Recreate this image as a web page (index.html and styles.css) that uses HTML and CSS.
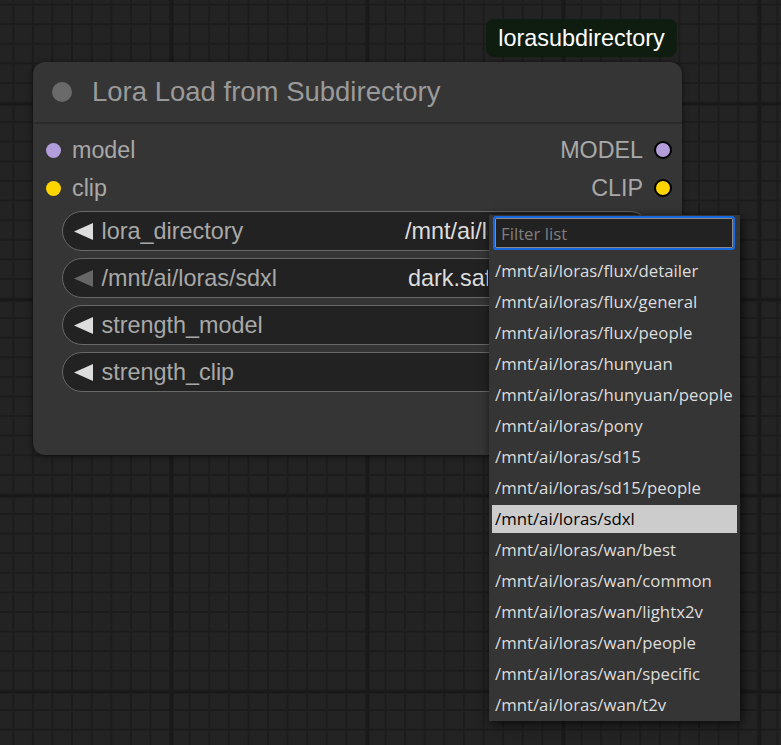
FILE: index.html
```html
<!DOCTYPE html>
<html>
<head>
<meta charset="utf-8">
<link rel="stylesheet" href="styles.css">
</head>
<body>
<div class="canvas">
  <div class="badge">lorasubdirectory</div>

  <div class="node">
    <div class="node-title">
      <span class="title-dot"></span>
      <span class="title-text">Lora Load from Subdirectory</span>
    </div>
    <div class="node-body">
      <div class="slot-row">
        <div class="slot slot-in"><span class="dot dot-model"></span><span>model</span></div>
        <div class="slot slot-out"><span>MODEL</span><span class="dot dot-model dot-out"></span></div>
      </div>
      <div class="slot-row">
        <div class="slot slot-in"><span class="dot dot-clip"></span><span>clip</span></div>
        <div class="slot slot-out"><span>CLIP</span><span class="dot dot-clip dot-out"></span></div>
      </div>

      <div class="widgets">
        <div class="widget">
          <svg class="arrow" width="19" height="17" viewBox="0 0 19 17"><polygon points="0,8.5 19,0 19,17"/></svg>
          <span class="w-label">lora_directory</span>
          <span class="w-value">/mnt/ai/loras/sdxl</span>
        </div>
        <div class="widget">
          <svg class="arrow arrow-dim" width="19" height="17" viewBox="0 0 19 17"><polygon points="0,8.5 19,0 19,17"/></svg>
          <span class="w-label">/mnt/ai/loras/sdxl</span>
          <span class="w-value w-value-2">dark.safetensors</span>
        </div>
        <div class="widget">
          <svg class="arrow" width="19" height="17" viewBox="0 0 19 17"><polygon points="0,8.5 19,0 19,17"/></svg>
          <span class="w-label">strength_model</span>
        </div>
        <div class="widget">
          <svg class="arrow" width="19" height="17" viewBox="0 0 19 17"><polygon points="0,8.5 19,0 19,17"/></svg>
          <span class="w-label">strength_clip</span>
        </div>
      </div>
    </div>
  </div>

  <div class="menu">
    <div class="filter"><input class="filter-input" type="text" placeholder="Filter list"></div>
    <div class="items">
      <div class="item">/mnt/ai/loras/flux/detailer</div>
      <div class="item">/mnt/ai/loras/flux/general</div>
      <div class="item">/mnt/ai/loras/flux/people</div>
      <div class="item">/mnt/ai/loras/hunyuan</div>
      <div class="item">/mnt/ai/loras/hunyuan/people</div>
      <div class="item">/mnt/ai/loras/pony</div>
      <div class="item">/mnt/ai/loras/sd15</div>
      <div class="item">/mnt/ai/loras/sd15/people</div>
      <div class="item item-selected">/mnt/ai/loras/sdxl</div>
      <div class="item">/mnt/ai/loras/wan/best</div>
      <div class="item">/mnt/ai/loras/wan/common</div>
      <div class="item">/mnt/ai/loras/wan/lightx2v</div>
      <div class="item">/mnt/ai/loras/wan/people</div>
      <div class="item">/mnt/ai/loras/wan/specific</div>
      <div class="item">/mnt/ai/loras/wan/t2v</div>
    </div>
  </div>
</div>
</body>
</html>
```

FILE: styles.css
```css
html, body {
  margin: 0;
  padding: 0;
}

body {
  width: 781px;
  height: 745px;
  overflow: hidden;
  background-color: #232323;
  background-image:
    linear-gradient(to right, #191919 3px, transparent 3px),
    linear-gradient(to bottom, #191919 3px, transparent 3px),
    linear-gradient(to right, #1c1c1c 2px, transparent 2px),
    linear-gradient(to bottom, #1c1c1c 2px, transparent 2px);
  background-size: 196px 100%, 100% 196px, 19.6px 100%, 100% 19.6px;
  background-position: 170.5px 0, 0 102.5px, 12.3px 0, 0 3.6px;
  font-family: "Liberation Sans", Arial, sans-serif;
}

.canvas {
  position: relative;
  width: 781px;
  height: 745px;
}

/* node badge */
.badge {
  position: absolute;
  left: 486px;
  top: 19px;
  width: 191px;
  height: 38px;
  box-sizing: border-box;
  border-radius: 8px;
  background: #0e1d0f;
  color: #ffffff;
  font-size: 23.4px;
  display: flex;
  align-items: center;
  justify-content: center;
}

/* node */
.node {
  position: absolute;
  left: 33px;
  top: 62px;
  width: 649px;
  height: 393px;
  border-radius: 12px;
  background: #353535;
  box-shadow: 0 1px 6px rgba(0, 0, 0, 0.55);
}

.node-title {
  height: 60px;
  border-bottom: 2px solid #2b2b2b;
  display: flex;
  align-items: center;
  padding-left: 19px;
}

.title-dot {
  width: 20px;
  height: 20px;
  border-radius: 50%;
  background: #6a6a6a;
}

.title-text {
  margin-left: 20px;
  font-size: 27.5px;
  color: #9a9a9a;
}

.node-body {
  padding-top: 7px;
}

.slot-row {
  height: 38px;
  display: flex;
  align-items: center;
  justify-content: space-between;
}

.slot {
  display: flex;
  align-items: center;
  font-size: 23.3px;
  color: #a8a8a8;
}

.slot-in {
  padding-left: 12.5px;
  gap: 11.5px;
}

.slot-out {
  padding-right: 10px;
  gap: 11px;
}

.dot {
  width: 15px;
  height: 15px;
  border-radius: 50%;
}

.dot-out {
  width: 14px;
  height: 14px;
  border: 2px solid #000;
}

.dot-model {
  background: #b39ddb;
}

.dot-clip {
  background: #ffd500;
}

.widgets {
  margin-top: 4px;
  display: flex;
  flex-direction: column;
  gap: 7px;
}

.widget {
  margin-left: 29px;
  width: 588px;
  height: 40px;
  box-sizing: border-box;
  border: 1.5px solid #686868;
  border-radius: 20px;
  background: #222222;
  display: flex;
  align-items: center;
  padding: 0 12px 0 11px;
  font-size: 23.4px;
}

.arrow {
  flex: none;
  fill: #dddddd;
}

.arrow-dim {
  fill: #666666;
}

.w-label {
  margin-left: 8.5px;
  flex: 1;
  color: #a8a8a8;
  white-space: nowrap;
}

/* value text, cut off where the dropdown covers the widget */
.w-value {
  width: 83px;
  margin-right: 149px;
  overflow: hidden;
  color: #dddddd;
  white-space: nowrap;
}

.w-value-2 {
  width: 80px;
}

/* dropdown menu */
.menu {
  position: absolute;
  left: 489px;
  top: 215px;
  width: 251px;
  height: 506px;
  background: #353535;
  box-shadow: 2px 2px 10px rgba(0, 0, 0, 0.75);
  font-family: "Open Sans", "Noto Sans", sans-serif;
}

.filter {
  padding: 3px 0 0 6px;
}

.filter-input {
  display: block;
  width: 238px;
  height: 30px;
  box-sizing: border-box;
  margin: 0;
  border: 1px solid #8a8a8a;
  outline: 2px solid #1769e0;
  border-radius: 1px;
  background: #222222;
  color: #dddddd;
  padding: 0 5px;
  font-family: "Open Sans", "Noto Sans", sans-serif;
  font-size: 16.8px;
}

.filter-input::placeholder {
  color: #7f7f7f;
}

.items {
  margin-top: 9px;
  display: flex;
  flex-direction: column;
  gap: 3px;
}

.item {
  margin: 0 3px;
  height: 28px;
  line-height: 28px;
  padding-left: 3px;
  font-size: 16.8px;
  color: #dddddd;
  white-space: nowrap;
}

.item-selected {
  background: #cccccc;
  color: #000000;
}
```
